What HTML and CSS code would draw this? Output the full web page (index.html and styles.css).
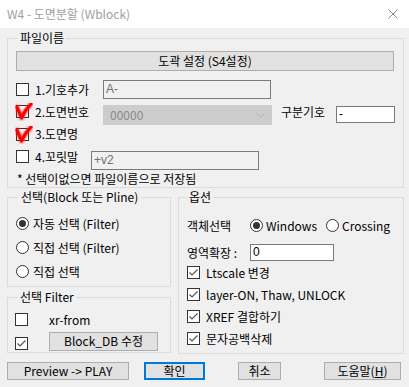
FILE: index.html
```html
<!DOCTYPE html>
<html>

<head>
    <meta charset="utf-8">
    <title>W4 - 도면분할 (Wblock)</title>
    <link rel="stylesheet" href="styles.css">
</head>

<body>
    <svg class="defs" width="0" height="0">
        <filter id="glow" x="-50%" y="-50%" width="200%" height="200%">
            <feGaussianBlur stdDeviation="1.2"></feGaussianBlur>
        </filter>
    </svg>
    <div class="titlebar">
        <span class="title">W4 - 도면분할 (Wblock)</span>
        <svg class="close" width="10" height="10" viewBox="0 0 10 10">
            <path d="M0.5 0.5 L9.5 9.5 M9.5 0.5 L0.5 9.5" stroke="#8a8a8a" stroke-width="1" fill="none"></path>
        </svg>
    </div>

    <div class="dialog">
        <fieldset class="group file-group">
            <legend>파일이름</legend>
            <button class="btn bar">도곽 설정 (S4설정)</button>
            <div class="row r1">
                <span class="chk"></span>
                <span class="lbl w68">1.기호추가</span>
                <span class="field dim w167">A-</span>
            </div>
            <div class="row r2">
                <span class="chk red">
                    <svg class="mark" width="18" height="18" viewBox="0 0 18 18">
                        <path d="M2 4 Q4 9 6.5 15 Q10 7 16 1" stroke="#ff2020" stroke-width="4.5" fill="none" stroke-linecap="round" stroke-linejoin="round" filter="url(#glow)" opacity="0.8"></path>
                        <path d="M2 4 Q4 9 6.5 15 Q10 7 16 1" stroke="#f00" stroke-width="3" fill="none" stroke-linecap="round" stroke-linejoin="round"></path>
                    </svg>
                </span>
                <span class="lbl w68">2.도면번호</span>
                <span class="combo">00000
                    <svg class="chev" width="9" height="5" viewBox="0 0 9 5">
                        <path d="M0.5 0.5 L4.5 4.5 L8.5 0.5" stroke="#b0b0b0" fill="none"></path>
                    </svg>
                </span>
                <span class="lbl sep">구분기호</span>
                <span class="field white w59">-</span>
            </div>
            <div class="row r3">
                <span class="chk red">
                    <svg class="mark" width="18" height="18" viewBox="0 0 18 18">
                        <path d="M2 4 Q4 9 6.5 15 Q10 7 16 1" stroke="#ff2020" stroke-width="4.5" fill="none" stroke-linecap="round" stroke-linejoin="round" filter="url(#glow)" opacity="0.8"></path>
                        <path d="M2 4 Q4 9 6.5 15 Q10 7 16 1" stroke="#f00" stroke-width="3" fill="none" stroke-linecap="round" stroke-linejoin="round"></path>
                    </svg>
                </span>
                <span class="lbl">3.도면명</span>
            </div>
            <div class="row r4">
                <span class="chk"></span>
                <span class="lbl w56">4.꼬릿말</span>
                <span class="field dim w167 short">+v2</span>
            </div>
            <div class="row note">* 선택이없으면 파일이름으로 저장됨</div>
        </fieldset>

        <div class="lower">
            <div class="col-left">
                <fieldset class="group sel-group">
                    <legend>선택(Block 또는 Pline)</legend>
                    <div class="opt"><span class="radio on"></span><span>자동 선택 (Filter)</span></div>
                    <div class="opt"><span class="radio"></span><span>직접 선택 (Filter)</span></div>
                    <div class="opt"><span class="radio"></span><span>직접 선택</span></div>
                </fieldset>
                <fieldset class="group filter-group">
                    <legend>선택 Filter</legend>
                    <div class="frow">
                        <span class="chk"></span>
                        <span class="xr">xr-from</span>
                    </div>
                    <div class="frow">
                        <span class="chk light on">
                            <svg width="11" height="11" viewBox="0 0 11 11"><path d="M1.5 5.5 L4 8 L9.5 2.5" stroke="#555" stroke-width="1.2" fill="none"></path></svg>
                        </span>
                        <button class="btn db">Block_DB 수정</button>
                    </div>
                </fieldset>
            </div>

            <fieldset class="group opt-group">
                <legend>옵션</legend>
                <div class="orow pick">
                    <span class="olbl">객체선택</span>
                    <span class="ritem win"><span class="radio on"></span>Windows</span>
                    <span class="ritem"><span class="radio"></span>Crossing</span>
                </div>
                <div class="orow area">
                    <span class="olbl">영역확장 :</span>
                    <span class="field white w83">0</span>
                </div>
                <div class="crow"><span class="chk light on"><svg width="11" height="11" viewBox="0 0 11 11"><path d="M1.5 5.5 L4 8 L9.5 2.5" stroke="#555" stroke-width="1.2" fill="none"></path></svg></span>Ltscale 변경</div>
                <div class="crow"><span class="chk light on"><svg width="11" height="11" viewBox="0 0 11 11"><path d="M1.5 5.5 L4 8 L9.5 2.5" stroke="#555" stroke-width="1.2" fill="none"></path></svg></span>layer-ON, Thaw, UNLOCK</div>
                <div class="crow"><span class="chk light on"><svg width="11" height="11" viewBox="0 0 11 11"><path d="M1.5 5.5 L4 8 L9.5 2.5" stroke="#555" stroke-width="1.2" fill="none"></path></svg></span>XREF 결합하기</div>
                <div class="crow"><span class="chk light on"><svg width="11" height="11" viewBox="0 0 11 11"><path d="M1.5 5.5 L4 8 L9.5 2.5" stroke="#555" stroke-width="1.2" fill="none"></path></svg></span>문자공백삭제</div>
            </fieldset>
        </div>

        <div class="actions">
            <button class="btn preview">Preview -&gt; PLAY</button>
            <button class="btn ok">확인</button>
            <button class="btn cancel">취소</button>
            <button class="btn help">도움말(<u>H</u>)</button>
        </div>
    </div>
</body>

</html>
```

FILE: styles.css
```css
body {
    margin: 0;
    width: 409px;
    height: 387px;
    overflow: hidden;
    background: #f0f0f0;
    font-family: "Noto Sans CJK KR", "Noto Sans", sans-serif;
    font-size: 12px;
    color: #000;
}

.defs {
    position: absolute;
}

.titlebar {
    height: 28px;
    background: #fff;
    display: flex;
    align-items: center;
    justify-content: space-between;
    padding: 0 11px 0 7px;
}

.title {
    color: #a0a0a0;
    line-height: 16px;
}

.dialog {
    padding: 2px 5px 0 7px;
}

.group {
    margin: 0;
    border: 1px solid #dcdcdc;
    min-inline-size: 0;
}

.group legend {
    padding: 0 2px;
    line-height: 16px;
}

/* 파일이름 */
.file-group {
    padding: 5px 9px 0 8px;
}

.file-group legend {
    margin-left: 2px;
}

.btn {
    font-family: inherit;
    font-size: 12px;
    color: #000;
    background: #e1e1e1;
    border: 1px solid #adadad;
    padding: 0;
    height: 18px;
    line-height: 16px;
    box-sizing: border-box;
}

.bar {
    display: block;
    width: 100%;
    height: 20px;
}

.row {
    display: flex;
    align-items: center;
}

.r1 {
    margin-top: 9px;
    height: 19px;
}

.r2 {
    margin-top: 6px;
    height: 20px;
    align-items: flex-start;
}

.r3 {
    height: 18px;
}

.r4 {
    margin-top: 7px;
    height: 19px;
    align-items: flex-start;
}

.note {
    height: 18px;
    padding-left: 1px;
}

.chk {
    position: relative;
    flex: none;
    width: 13px;
    height: 13px;
    box-sizing: border-box;
    border: 1px solid #333;
    background: #fff;
}

.chk.light {
    display: flex;
    align-items: center;
    justify-content: center;
}

.chk .mark {
    position: absolute;
    left: -2px;
    top: -3px;
}

.lbl {
    flex: none;
    margin-left: 6px;
    line-height: 14px;
}

.r2 .lbl,
.r4 .lbl {
    margin-top: 0;
}

.w68 {
    width: 68px;
}

.w56 {
    width: 56px;
}

.field {
    flex: none;
    box-sizing: border-box;
    border: 1px solid #7a7a7a;
    height: 19px;
    line-height: 17px;
    padding-left: 2px;
    font-family: "Liberation Sans", sans-serif;
}

.field.dim {
    background: #f0f0f0;
    color: #6d6d6d;
}

.field.white {
    background: #fff;
    color: #000;
}

.w167 {
    width: 168px;
}

.short {
    width: 168px;
    height: 19px;
    margin-top: 1px;
}

.combo {
    flex: none;
    box-sizing: border-box;
    width: 169px;
    height: 20px;
    background: #cccccc;
    border: 1px solid #cccccc;
    color: #8a8a8a;
    line-height: 18px;
    padding-left: 6px;
    display: flex;
    align-items: center;
    justify-content: space-between;
    padding-right: 6px;
}

.sep {
    width: 55px;
    margin-left: 9px;
    margin-top: 3px;
}

.w59 {
    width: 59px;
    height: 17px;
    line-height: 15px;
    margin-top: 1px;
}

/* lower part */
.lower {
    display: flex;
    align-items: flex-start;
    margin-top: 1px;
}

.col-left {
    width: 164px;
    display: flex;
    flex-direction: column;
}

.sel-group {
    padding: 6px 4px 3px 8px;
}

.sel-group legend,
.filter-group legend {
    margin-left: 3px;
}

.opt {
    height: 24px;
    display: flex;
    align-items: center;
    gap: 4px;
}

.radio {
    flex: none;
    width: 13px;
    height: 13px;
    box-sizing: border-box;
    border: 1px solid #333;
    border-radius: 50%;
    background: #fff;
    display: flex;
    align-items: center;
    justify-content: center;
}

.radio.on::after {
    content: "";
    width: 7px;
    height: 7px;
    border-radius: 50%;
    background: #333;
}

.filter-group {
    margin-top: 2px;
    padding: 3px 4px 0 7px;
}

.frow {
    height: 22px;
    display: flex;
    align-items: center;
}

.xr {
    margin-left: 21px;
}

.frow .chk.on {
    margin-top: 5px;
}

.db {
    margin-left: 21px;
    width: 109px;
    height: 19px;
}

.opt-group {
    width: 226px;
    box-sizing: border-box;
    margin-left: 7px;
    padding: 11px 4px 4px 8px;
}

.opt-group legend {
    margin-left: 0;
}

.orow {
    display: flex;
    align-items: center;
    height: 18px;
}

.area {
    margin-top: 9px;
}

.olbl {
    width: 63px;
    flex: none;
}

.ritem {
    display: flex;
    align-items: center;
    gap: 3px;
}

.win {
    width: 76px;
}

.w83 {
    width: 84px;
    height: 17px;
    line-height: 15px;
}

.crow {
    height: 22px;
    display: flex;
    align-items: center;
    gap: 6px;
}

/* bottom buttons */
.actions {
    display: flex;
    margin-top: 8px;
}

.preview {
    width: 122px;
}

.ok {
    margin-left: 15px;
    width: 61px;
    border: 2px solid #0078d7;
    line-height: 14px;
}

.cancel {
    margin-left: 33px;
    width: 43px;
}

.help {
    margin-left: 43px;
    width: 77px;
}
```
